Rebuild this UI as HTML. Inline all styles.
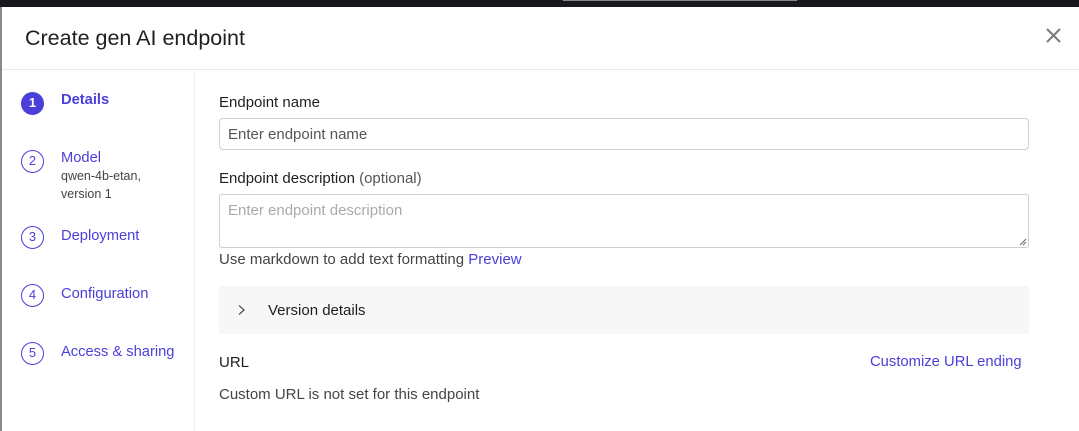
<!DOCTYPE html>
<html><head><style>
*{margin:0;padding:0;box-sizing:border-box}
body{width:1079px;height:431px;overflow:hidden;background:#fff;font-family:"Liberation Sans",sans-serif;position:relative;color:#1f1f1f}
.a{position:absolute;white-space:nowrap}
.c{position:absolute;left:21px;width:23px;height:23px;border:1.5px solid #4b3fd9;border-radius:50%;color:#4b3fd9;font-size:13px;text-align:center;line-height:20px}
.l{position:absolute;left:61px;color:#4b3fd9;font-size:14.7px}
.lab{position:absolute;left:219px;font-size:15px;color:#1f1f1f}
</style></head><body>
<div class="a" style="left:0;top:0;width:1079px;height:7px;background:#19181c"></div>
<div class="a" style="left:563px;top:0;width:234px;height:1px;background:#8a8a8a"></div>
<div class="a" style="left:0;top:7px;width:2px;height:424px;background:#8a8a8a"></div>
<div class="a" style="left:25px;top:26px;font-size:21.5px;color:#1f1f1f">Create gen AI endpoint</div>
<svg class="a" style="left:1045px;top:27px" width="17" height="17" viewBox="0 0 17 17"><path d="M2 2L15 15M15 2L2 15" stroke="#7a7a7a" stroke-width="2"/></svg>
<div class="a" style="left:2px;top:69px;width:1077px;height:1px;background:#e8e8e8"></div>
<div class="a" style="left:194px;top:70px;width:1px;height:361px;background:#eeeeee"></div>

<div class="c" style="top:92px;background:#4b3fd9;color:#fff;font-weight:bold">1</div>
<div class="l" style="top:92px;font-weight:bold">Details</div>
<div class="c" style="top:150px">2</div>
<div class="l" style="top:150px">Model</div>
<div class="a" style="left:61px;top:169px;font-size:12.5px;color:#444">qwen-4b-etan,</div>
<div class="a" style="left:61px;top:187px;font-size:12.5px;color:#444">version 1</div>
<div class="c" style="top:226px">3</div>
<div class="l" style="top:228px">Deployment</div>
<div class="c" style="top:284px">4</div>
<div class="l" style="top:286px">Configuration</div>
<div class="c" style="top:342px">5</div>
<div class="l" style="top:344px">Access &amp; sharing</div>

<div class="lab" style="top:94px">Endpoint name</div>
<div class="a" style="left:219px;top:118px;width:810px;height:32px;border:1px solid #cfcfcf;border-radius:4px;padding:7px 8px;font-size:15px;color:#555">Enter endpoint name</div>
<div class="lab" style="top:170px">Endpoint description <span style="color:#555">(optional)</span></div>
<div class="a" style="left:219px;top:194px;width:810px;height:54px;border:1px solid #cfcfcf;border-radius:3px;padding:7px 8px;font-size:15px;color:#aaa">Enter endpoint description</div>
<svg class="a" style="left:1019px;top:238px" width="8" height="8"><path d="M1 7L7 1M4 7L7 4" stroke="#666" stroke-width="1"/></svg>
<div class="lab" style="top:251px;color:#444">Use markdown to add text formatting <span style="color:#4b3fd9">Preview</span></div>
<div class="a" style="left:219px;top:286px;width:810px;height:48px;background:#f7f7f7;border-radius:3px"></div>
<svg class="a" style="left:237px;top:304px" width="10" height="12"><path d="M2 1.5L7 6L2 10.5" stroke="#333" stroke-width="1.1" fill="none"/></svg>
<div class="lab" style="left:268px;top:302px">Version details</div>
<div class="lab" style="top:354px">URL</div>
<div class="a" style="left:870px;top:354px;font-size:14.8px;color:#4b3fd9">Customize URL ending</div>
<div class="lab" style="top:386px;color:#444">Custom URL is not set for this endpoint</div>
</body></html>
